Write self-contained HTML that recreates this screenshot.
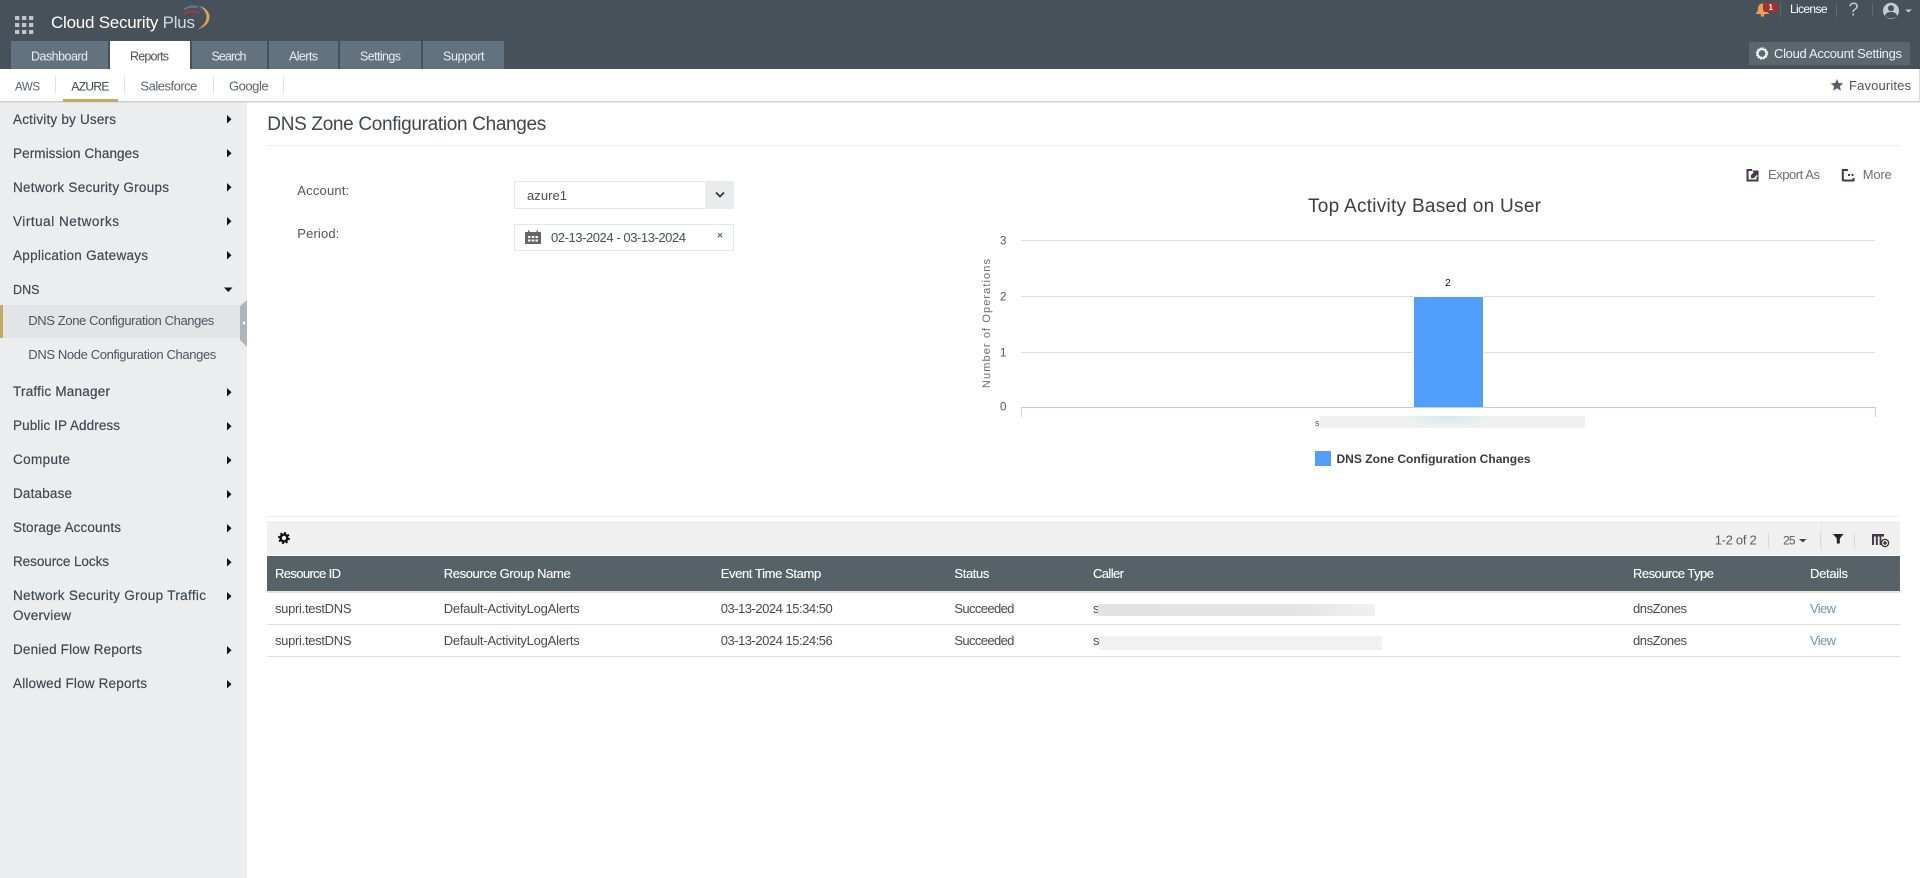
<!DOCTYPE html>
<html lang="en">
<head>
<meta charset="utf-8">
<title>DNS Zone Configuration Changes - Cloud Security Plus</title>
<style>
html,body{margin:0;padding:0;width:1920px;height:878px;overflow:hidden;background:#fff}
svg{display:block;position:absolute;left:0;top:0}
text{font-family:"Liberation Sans",sans-serif;font-size:13px;white-space:pre}
.hd{fill:#fff}
.tab{fill:#e9edf0}
.sub{fill:#5a646c}
.side{fill:#3c4852;stroke:#3c4852;stroke-width:.18px;font-size:13.5px}
.sm{fill:#4a5560;font-size:13px}
.th{fill:#fff;stroke:#fff;stroke-width:.12px}
.td{fill:#444b50}
.lbl{fill:#555}
.lnk{fill:#6d94b3}
</style>
</head>
<body>
<svg width="1920" height="878" viewBox="0 0 1920 878" xmlns="http://www.w3.org/2000/svg">
<defs>
<radialGradient id="glow" cx=".5" cy=".5" r=".5"><stop offset="0" stop-color="#cfe6f2"/><stop offset="1" stop-color="#eef0f0"/></radialGradient>
<linearGradient id="r1" x1="0" x2="1" y1="0" y2="0"><stop offset="0" stop-color="#e2e2e2"/><stop offset=".7" stop-color="#e4e4e4"/><stop offset="1" stop-color="#f0f0f0"/></linearGradient>
<clipPath id="blurclip"><rect x="1320" y="416" width="265" height="12"/></clipPath>
</defs>

<!-- header -->
<rect x="0" y="0" width="1920" height="69" fill="#47515a"/>
<g fill="#bfc4c7">
<rect x="15" y="16" width="4.3" height="4"/><rect x="22" y="16" width="4.3" height="4"/><rect x="29" y="16" width="4.3" height="4"/>
<rect x="15" y="23" width="4.3" height="4"/><rect x="22" y="23" width="4.3" height="4"/><rect x="29" y="23" width="4.3" height="4"/>
<rect x="15" y="30" width="4.3" height="4"/><rect x="22" y="30" width="4.3" height="4"/><rect x="29" y="30" width="4.3" height="4"/>
</g>
<text class="hd" x="51" y="28" style="font-size:17px" textLength="144">Cloud Security <tspan fill="#d5d9dc">Plus</tspan></text>
<path d="M199 5.5C206 8 209.5 12 209.5 17C209.5 23 204.5 27.5 197.5 29.5C202.5 26.5 206.5 22.5 206.5 17C206.5 12 203.5 8.5 199 5.5Z" fill="#e8a344"/>
<path d="M190 5.5C197 4.5 203 8 205.5 14" fill="none" stroke="#3f6cb0" stroke-width="1.6" stroke-dasharray="1.5 1"/>
<path d="M184 9.5C188 6.5 193 6 197 7.5" fill="none" stroke="#6f7980" stroke-width="1.6"/>
<path d="M183.5 15C187 11 194 10 199.5 13" fill="none" stroke="#b2343b" stroke-width="1.8"/>

<!-- tabs -->
<g fill="#62737f">
<rect x="11" y="41" width="97" height="28"/>
<rect x="192" y="41" width="75" height="28"/>
<rect x="269" y="41" width="69" height="28"/>
<rect x="340" y="41" width="81" height="28"/>
<rect x="423" y="41" width="81" height="28"/>
</g>
<rect x="110" y="41" width="80" height="28" fill="#fff"/>
<text class="tab" x="31" y="60.5" textLength="57" style="font-size:12.5px">Dashboard</text>
<text x="130" y="60.5" fill="#4a5258" textLength="39" style="font-size:12.5px">Reports</text>
<text class="tab" x="211.5" y="60.5" textLength="35" style="font-size:12.5px">Search</text>
<text class="tab" x="289" y="60.5" textLength="29" style="font-size:12.5px">Alerts</text>
<text class="tab" x="360" y="60.5" textLength="41" style="font-size:12.5px">Settings</text>
<text class="tab" x="443" y="60.5" textLength="41.5" style="font-size:12.5px">Support</text>

<!-- top right -->
<path d="M1762 3.5C1765 3.5 1766.5 6 1766.5 9C1766.5 11.5 1768 13 1769.5 14L1755 14C1756.5 13 1758 11.5 1758 9C1758 6 1759.5 3.5 1762 3.5Z" fill="#e3a254"/>
<circle cx="1762.5" cy="15" r="1.8" fill="#e3a254"/>
<rect x="1763" y="2.5" width="15" height="9.5" rx="2.5" fill="#a62f30"/>
<text x="1768.5" y="10" fill="#fff" style="font-size:8px;font-weight:bold">1</text>
<rect x="1780" y="3" width="1" height="14" fill="#5f6971"/>
<text class="hd" x="1790" y="13" textLength="37.5" style="font-size:12px">License</text>
<rect x="1836" y="3" width="1" height="14" fill="#5f6971"/>
<text x="1848.5" y="15.5" fill="#c5cacd" style="font-size:18px">?</text>
<rect x="1872" y="3" width="1" height="14" fill="#5f6971"/>
<circle cx="1891" cy="10.8" r="8" fill="#c5cacd"/>
<circle cx="1891" cy="8.3" r="3" fill="#47515a"/>
<path d="M1885 16C1885.5 13 1888 12 1891 12C1894 12 1896.5 13 1897 16C1895.5 17.5 1893.5 18.3 1891 18.3C1888.5 18.3 1886.5 17.5 1885 16Z" fill="#47515a"/>
<path d="M1905 9.5H1912L1908.5 12.5Z" fill="#c5cacd"/>

<rect x="1749" y="42" width="161" height="23" fill="#5b666f"/>
<circle cx="1762" cy="53.5" r="4.3" fill="none" stroke="#f2f2f2" stroke-width="1.9"/>
<circle cx="1762" cy="53.5" r="5.6" fill="none" stroke="#f2f2f2" stroke-width="1.2" stroke-dasharray="1.8 1.15"/>
<text x="1774" y="58" fill="#eef0f1" textLength="128">Cloud Account Settings</text>

<!-- sub nav -->
<rect x="0" y="101" width="1920" height="1.5" fill="#cfd0d1"/>
<rect x="1919" y="69" width="1" height="32" fill="#dcdcdc"/>
<text class="sub" x="15" y="90.5" textLength="25" style="font-size:11.5px">AWS</text>
<rect x="55" y="76" width="1" height="18" fill="#e2e2e2"/>
<text x="71.4" y="90.5" fill="#39424a" textLength="38" style="font-size:12px">AZURE</text>
<rect x="63" y="99" width="55" height="3" fill="#c5a95f"/>
<rect x="124" y="76" width="1" height="18" fill="#e2e2e2"/>
<text class="sub" x="140.4" y="90.5" textLength="57">Salesforce</text>
<rect x="213" y="76" width="1" height="18" fill="#e2e2e2"/>
<text class="sub" x="229" y="90.5" textLength="39.6">Google</text>
<rect x="283" y="76" width="1" height="18" fill="#e2e2e2"/>
<path d="M1837 79L1838.8 83L1843.2 83.4L1839.9 86.3L1840.9 90.6L1837 88.3L1833.1 90.6L1834.1 86.3L1830.8 83.4L1835.2 83Z" fill="#565f67"/>
<text x="1849" y="90" fill="#48525a" textLength="62">Favourites</text>

<!-- sidebar -->
<rect x="0" y="102.5" width="247" height="775.5" fill="#ecedef"/>
<rect x="0" y="305" width="240" height="33" fill="#e3e4e6"/>
<rect x="0" y="305" width="3" height="33" fill="#c5a95f"/>
<path d="M240 306L247 300V347L240 340Z" fill="#adb5b9"/>
<path d="M245 321V325L242 323Z" fill="#fff"/>
<g>
<text class="side" x="13" y="124" textLength="103">Activity by Users</text>
<text class="side" x="13" y="158" textLength="126">Permission Changes</text>
<text class="side" x="13" y="192" textLength="156">Network Security Groups</text>
<text class="side" x="13" y="226" textLength="106">Virtual Networks</text>
<text class="side" x="13" y="260" textLength="135">Application Gateways</text>
<text class="side" x="13" y="294" textLength="26.5" style="font-size:12.5px">DNS</text>
<text class="sm" x="28.3" y="325" textLength="186">DNS Zone Configuration Changes</text>
<text class="sm" x="28.3" y="359" textLength="188">DNS Node Configuration Changes</text>
<text class="side" x="13" y="396" textLength="97">Traffic Manager</text>
<text class="side" x="13" y="430" textLength="107">Public IP Address</text>
<text class="side" x="13" y="464" textLength="57">Compute</text>
<text class="side" x="13" y="498" textLength="59">Database</text>
<text class="side" x="13" y="532" textLength="108">Storage Accounts</text>
<text class="side" x="13" y="566" textLength="96">Resource Locks</text>
<text class="side" x="13" y="600" textLength="193">Network Security Group Traffic</text>
<text class="side" x="13" y="620" textLength="58">Overview</text>
<text class="side" x="13" y="654" textLength="129">Denied Flow Reports</text>
<text class="side" x="13" y="688" textLength="134">Allowed Flow Reports</text>
</g>
<g fill="#111">
<path d="M227 115V123.5L231.5 119.3Z"/>
<path d="M227 149V157.5L231.5 153.3Z"/>
<path d="M227 183V191.5L231.5 187.3Z"/>
<path d="M227 217V225.5L231.5 221.3Z"/>
<path d="M227 251V259.5L231.5 255.3Z"/>
<path d="M224 287.5H232.5L228.3 292Z"/>
<path d="M227 388V396.5L231.5 392.3Z"/>
<path d="M227 422V430.5L231.5 426.3Z"/>
<path d="M227 456V464.5L231.5 460.3Z"/>
<path d="M227 490V498.5L231.5 494.3Z"/>
<path d="M227 524V532.5L231.5 528.3Z"/>
<path d="M227 558V566.5L231.5 562.3Z"/>
<path d="M227 592V600.5L231.5 596.3Z"/>
<path d="M227 646V654.5L231.5 650.3Z"/>
<path d="M227 680V688.5L231.5 684.3Z"/>
</g>

<!-- page title -->
<text x="267.3" y="130" fill="#3f474d" style="font-size:19px" textLength="279">DNS Zone Configuration Changes</text>
<rect x="267" y="145" width="1633" height="1" fill="#ececec"/>

<!-- filters -->
<text class="lbl" x="297.3" y="195" textLength="52">Account:</text>
<rect x="514.5" y="181.5" width="219" height="27" fill="#fff" stroke="#e3e8ea"/>
<rect x="705" y="181" width="29" height="28" fill="#e9ebec"/>
<path d="M716 192.5L720 196.5L724 192.5" fill="none" stroke="#333" stroke-width="1.8"/>
<text x="527" y="200" fill="#4a4f54" textLength="40">azure1</text>
<text class="lbl" x="297.3" y="238" textLength="42">Period:</text>
<rect x="514.5" y="224.5" width="219" height="26" fill="#fff" stroke="#e3e8ea"/>
<path d="M525 232H541V244H525Z" fill="#666"/>
<rect x="528" y="230.5" width="1.5" height="3" fill="#666"/><rect x="536.5" y="230.5" width="1.5" height="3" fill="#666"/>
<g fill="#fff"><rect x="528" y="236" width="2.5" height="2"/><rect x="531.8" y="236" width="2.5" height="2"/><rect x="535.5" y="236" width="2.5" height="2"/><rect x="528" y="239.5" width="2.5" height="2"/><rect x="531.8" y="239.5" width="2.5" height="2"/><rect x="535.5" y="239.5" width="2.5" height="2"/></g>
<text x="551" y="242" fill="#4a4f54" textLength="135">02-13-2024 - 03-13-2024</text>
<path d="M718 233.2L722 237.2M722 233.2L718 237.2" stroke="#5b7386" stroke-width="1.2"/>

<!-- export / more -->
<g fill="none" stroke="#47394d" stroke-width="2">
<path d="M1752 170H1747.5V180.5H1757.5V176.5"/>
<path d="M1842.8 181V170H1848M1842.8 180.5H1853.5V178"/>
</g>
<path d="M1751 178.2V175L1753.800 172.400L1752 170.500H1758.500V176.800L1756.600 175L1753.800 178.200Z" fill="#47394d"/>
<g fill="#47394d"><rect x="1848" y="174" width="2" height="2"/><rect x="1851.500" y="174" width="2" height="2"/></g>
<text x="1768" y="179" fill="#6d6d78" textLength="52">Export As</text>
<text x="1862.700" y="179" fill="#6d6d78" textLength="29">More</text>

<!-- chart -->
<text x="1308" y="212" fill="#3e3e3e" style="font-size:19px" textLength="233">Top Activity Based on User</text>
<g fill="#dcdfe1">
<rect x="1021" y="240" width="854" height="1"/>
<rect x="1021" y="296" width="854" height="1"/>
<rect x="1021" y="352" width="854" height="1"/>
</g>
<rect x="1021" y="407" width="854" height="1" fill="#b5d3e6"/>
<rect x="1021" y="407" width="1" height="10" fill="#c6d6e2"/>
<rect x="1875" y="407" width="1" height="10" fill="#c6d6e2"/>
<text x="1000" y="244.500" style="font-size:11.500px" fill="#555">3</text>
<text x="1000" y="300.500" style="font-size:11.500px" fill="#555">2</text>
<text x="1000" y="356.500" style="font-size:11.500px" fill="#555">1</text>
<text x="1000" y="410.500" style="font-size:11.500px" fill="#555">0</text>
<text transform="translate(990 388) rotate(-90)" x="0" y="0" fill="#6e6e6e" style="font-size:11px" textLength="129">Number of Operations</text>
<rect x="1413" y="296" width="71" height="111" fill="#fff"/>
<rect x="1414" y="297" width="69" height="110" fill="#529efd"/>
<text x="1445" y="286" fill="#111" style="font-size:10.500px">2</text>
<rect x="1320" y="416" width="265" height="12" fill="#f0f0f0"/>
<ellipse cx="1448" cy="416" rx="40" ry="11" fill="url(#glow)" clip-path="url(#blurclip)"/>
<text x="1315" y="426" fill="#555" style="font-size:9px">s</text>
<rect x="1315" y="451" width="16" height="15" fill="#529efd"/>
<text x="1336.500" y="463" fill="#3a3a3a" style="font-size:12px;font-weight:bold" textLength="194">DNS Zone Configuration Changes</text>

<!-- table toolbar -->
<rect x="267" y="516" width="1633" height="1" fill="#eeeeee"/>
<rect x="267" y="521" width="1633" height="34" fill="#f0f0f0"/>
<circle cx="284" cy="538" r="3.400" fill="none" stroke="#111" stroke-width="2.400"/>
<circle cx="284" cy="538" r="5" fill="none" stroke="#111" stroke-width="1.900" stroke-dasharray="2 1.900"/>
<text x="1714.700" y="544.700" fill="#555e66" textLength="42">1-2 of 2</text>
<rect x="1768" y="533" width="1" height="15" fill="#d8d8d8"/>
<text x="1783" y="544.700" fill="#555e66" textLength="12.500" style="font-size:12px">25</text>
<path d="M1799 539H1806.500L1802.800 542.500Z" fill="#444"/>
<rect x="1820" y="533" width="1" height="15" fill="#d8d8d8"/>
<rect x="1821" y="521" width="1" height="34" fill="#e7e7e7"/>
<path d="M1833 534H1843.500L1839.800 538.500V543.500H1836.800V538.500Z" fill="#222"/>
<rect x="1854" y="533" width="1" height="15" fill="#d8d8d8"/>
<path d="M1872 534H1884V536.500H1872ZM1872 536.500H1874V545H1872ZM1875.800 536.500H1877.800V545H1875.800ZM1879.600 536.500H1881.400V545H1879.600Z" fill="#47394d"/>
<circle cx="1885" cy="543" r="3.600" fill="#f0f0f0" stroke="#333" stroke-width="1.300"/>
<path d="M1883 543H1887M1885 541V545" stroke="#222" stroke-width="1.300"/>

<!-- table -->
<rect x="267" y="556" width="1633" height="35" fill="#576268"/>
<rect x="267" y="591" width="1633" height="2" fill="#e3e3e3"/>
<text class="th" x="275" y="578" textLength="66">Resource ID</text>
<text class="th" x="443.700" y="578" textLength="127">Resource Group Name</text>
<text class="th" x="720.700" y="578" textLength="100.500">Event Time Stamp</text>
<text class="th" x="954.400" y="578" textLength="35">Status</text>
<text class="th" x="1093" y="578" textLength="31">Caller</text>
<text class="th" x="1633" y="578" textLength="81">Resource Type</text>
<text class="th" x="1810" y="578" textLength="38">Details</text>

<text class="td" x="275" y="613" textLength="76.500">supri.testDNS</text>
<text class="td" x="443.700" y="613" textLength="136">Default-ActivityLogAlerts</text>
<text class="td" x="720.700" y="613" textLength="112">03-13-2024 15:34:50</text>
<text class="td" x="954.400" y="613" textLength="60">Succeeded</text>
<text class="td" x="1093" y="613">s</text>
<rect x="1098" y="604" width="277" height="12" fill="url(#r1)"/>
<text class="td" x="1633" y="613" textLength="54">dnsZones</text>
<text class="lnk" x="1810" y="613" textLength="26">View</text>
<rect x="267" y="624" width="1633" height="1" fill="#dedede"/>

<text class="td" x="275" y="645" textLength="76.500">supri.testDNS</text>
<text class="td" x="443.700" y="645" textLength="136">Default-ActivityLogAlerts</text>
<text class="td" x="720.700" y="645" textLength="112">03-13-2024 15:24:56</text>
<text class="td" x="954.400" y="645" textLength="60">Succeeded</text>
<text class="td" x="1093" y="645">s</text>
<rect x="1099" y="636" width="283" height="14" fill="#f1f1f1"/>
<text class="td" x="1633" y="645" textLength="54">dnsZones</text>
<text class="lnk" x="1810" y="645" textLength="26">View</text>
<rect x="267" y="656" width="1633" height="1" fill="#dedede"/>
</svg>
</body>
</html>
